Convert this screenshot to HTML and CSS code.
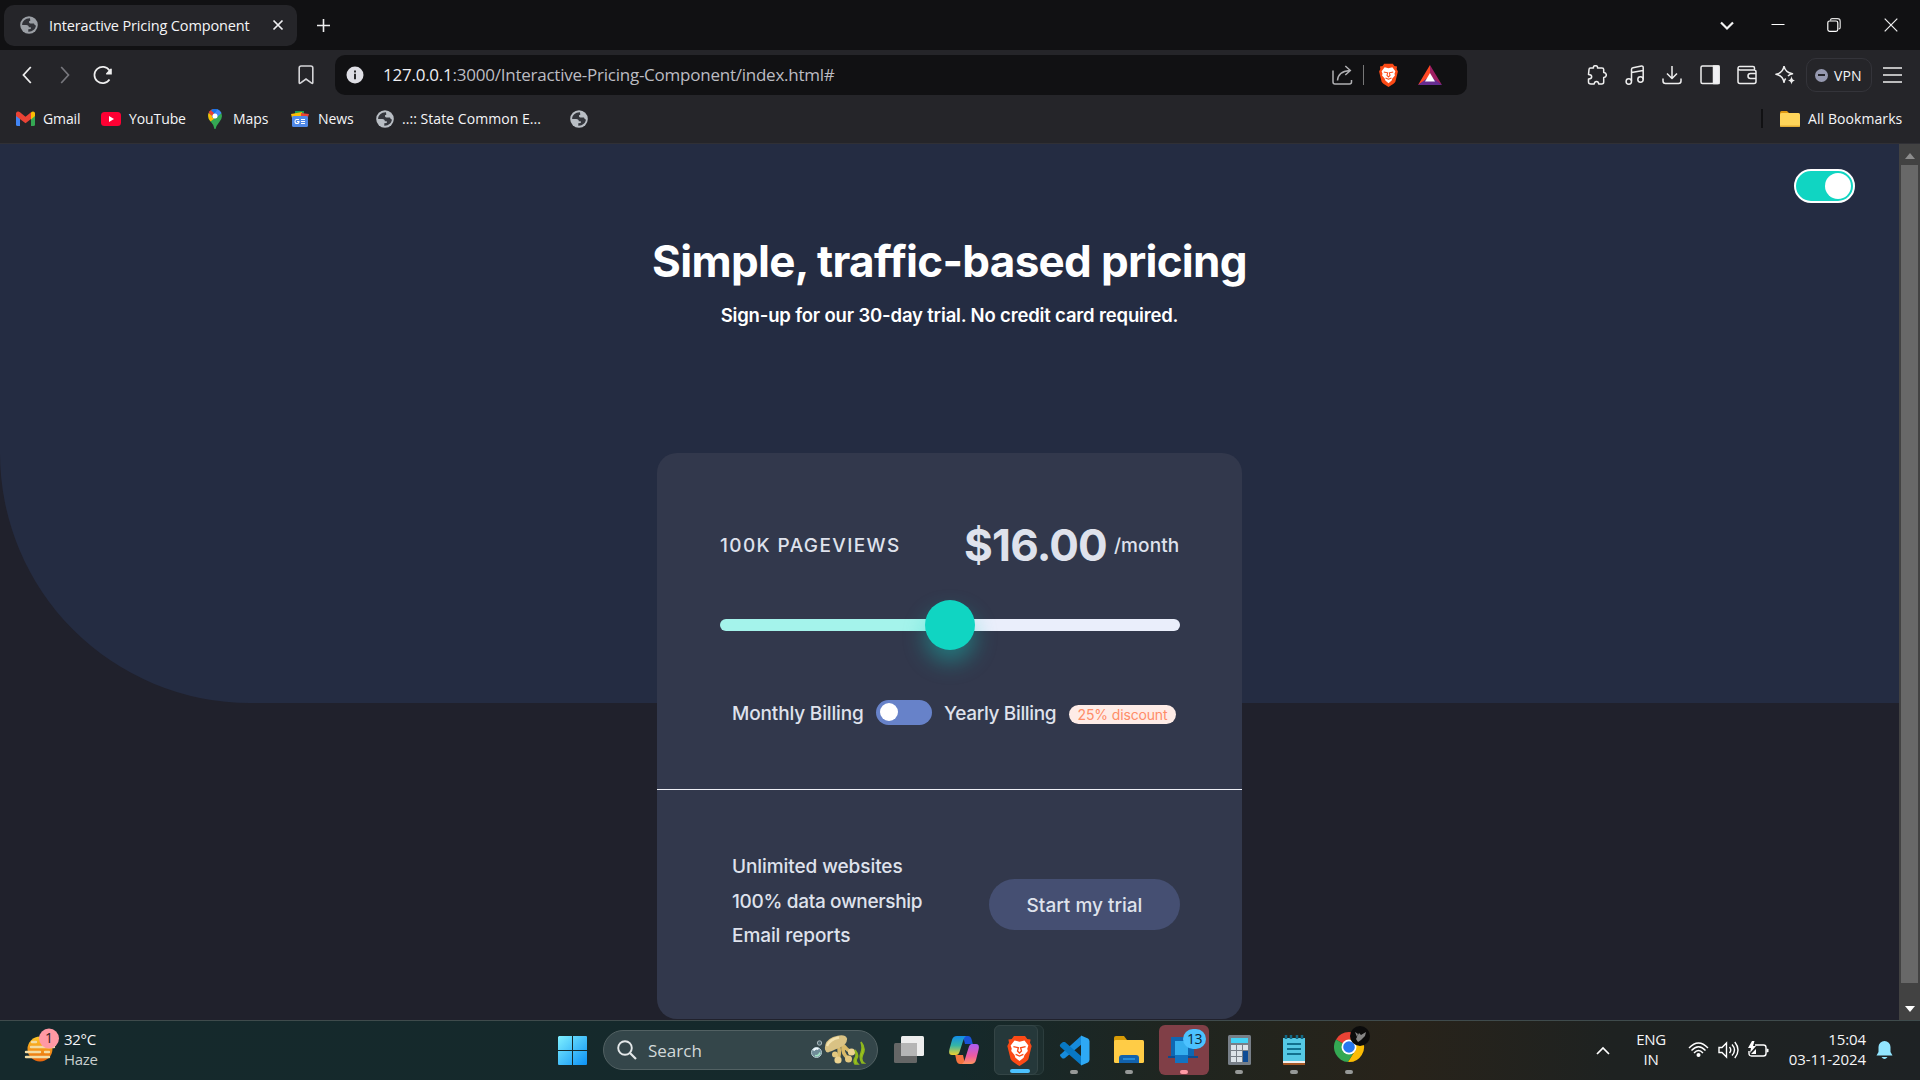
FILE: index.html
```html
<!DOCTYPE html>
<html lang="en">
<head>
<meta charset="utf-8">
<title>Interactive Pricing Component</title>
<link rel="stylesheet" href="styles.css">
</head>
<body>
<svg class="defs" width="0" height="0">
  <defs>
    <symbol id="globe" viewBox="0 0 18 18"><circle cx="9" cy="9" r="8.8" fill="#b9bec4"/><path d="M10 2.2C5.500 2 2.200 5 2.100 8.900L6.200 9C8.200 9 8.800 10 8.800 11.200L10.800 11.300L10.800 13L8.300 13.200L8.300 15.800C12.500 16 15.800 13 15.900 9.600C14.800 9.200 14.300 8.600 14 7.600L10.400 7.500C9.300 7.300 8.800 6.500 9 5.200L10.300 4.800Z" fill="#34363c"/></symbol>
    <symbol id="brave" viewBox="0 0 24 28"><path d="M7 1h10l2 2.500 3 .5-.5 3 1.500 3-3 12q-1 2-8 6-7-4-8-6L1 10l1.500-3L2 4l3-.5z" fill="#fb4a16"/><path d="M7.500 5l4.500 1 4.500-1L20 9.500l-1 3 .5 2L16.500 18l-.8 2.500L12 23.500l-3.700-3L7.500 18l-3-3.500.5-2-1-3z" fill="#fff"/><path d="M6.500 10.500l4.500 1-.8 3 1.800 1.800 1.800-1.800-.8-3 4.500-1M8.500 17.500l3.500 1.500 3.500-1.500" fill="none" stroke="#fb4a16" stroke-width="1.200"/></symbol>
  </defs>
</svg>

<header class="tabstrip">
  <div class="tab">
    <svg class="tab-globe" width="18" height="18"><use href="#globe"/></svg>
    <span class="tab-title">Interactive Pricing Component</span>
    <svg width="12" height="12" viewBox="0 0 12 12"><path d="M1.500 1.500l9 9m0-9l-9 9" stroke="#f0f0f2" stroke-width="1.700"/></svg>
  </div>
  <svg class="newtab" width="15" height="15" viewBox="0 0 15 15"><path d="M7.500 1v13M1 7.500h13" stroke="#eee" stroke-width="1.600"/></svg>
  <div class="window-buttons">
    <svg width="16" height="16" viewBox="0 0 16 16"><path d="M2 5.500l6 6 6-6" fill="none" stroke="#f3f3f3" stroke-width="2.200"/></svg>
    <svg width="14" height="16" viewBox="0 0 14 16"><path d="M0.500 7.500h13" stroke="#fff" stroke-width="1"/></svg>
    <svg width="14" height="14" viewBox="0 0 14 14"><path d="M3.500 2.500V2q.3-1.300 1.500-1.300h5.500q2.700 0 2.700 2.700v6q0 1.200-1.500 1.600" fill="none" stroke="#ddd" stroke-width="1.200"/><rect x=".8" y="3" width="10" height="10.300" rx="1.800" fill="none" stroke="#fff" stroke-width="1.200"/></svg>
    <svg width="14" height="14" viewBox="0 0 14 14"><path d="M.7.700l12.600 12.600M13.300.7L.7 13.300" stroke="#f0f0f0" stroke-width="1.200"/></svg>
  </div>
</header>

<nav class="toolbar">
  <div class="nav-left">
    <svg width="10" height="18" viewBox="0 0 10 18"><path d="M8.800 1L1.500 9l7.300 8" fill="none" stroke="#eee" stroke-width="1.800"/></svg>
    <svg width="10" height="18" viewBox="0 0 10 18"><path d="M1.200 1l7.300 8-7.300 8" fill="none" stroke="#77777d" stroke-width="1.700"/></svg>
    <svg class="reload" width="20" height="20" viewBox="0 0 20 20"><path d="M16.500 14.500A8.200 8.200 0 1 1 16.500 5.500" fill="none" stroke="#eee" stroke-width="1.700"/><path d="M18.800 4v5.500h-5.300q-1-.3-.3-1.200l4.200-4.500q.9-.7 1.400.2z" fill="#eee"/></svg>
    <svg class="mark" width="16" height="20" viewBox="0 0 16 20"><path d="M1.200 3q0-2 2-2h9.600q2 0 2 2v14.500q0 1.400-1.200.6L8 14l-5.600 4.100q-1.200.8-1.200-.6z" fill="none" stroke="#d5d5d8" stroke-width="1.600"/></svg>
  </div>
  <div class="urlbar">
    <svg width="18" height="18" viewBox="0 0 18 18"><circle cx="9" cy="9" r="8.500" fill="#dfdfe5"/><path d="M9 7.800v5.400M9 4.500v2" stroke="#222" stroke-width="1.900"/></svg>
    <span class="url"><b>127.0.0.1</b>:3000/Interactive-Pricing-Component/index.html#</span>
    <svg width="21" height="20" viewBox="0 0 21 20"><path d="M1 5.500V17q0 2 2 2h14.500q2 0 2-2v-2M5.500 15.500Q6 6.500 17.500 5.500M13.300 1l5 4.500-5 4.500" fill="none" stroke="#b0b0b3" stroke-width="1.500"/></svg>
    <i class="url-sep"></i>
    <svg width="21" height="24"><use href="#brave"/></svg>
    <svg class="bat" width="24" height="20" viewBox="0 0 24 20"><path d="M12 0L0 20l12-7z" fill="#ff4724"/><path d="M12 0l12 20-12-7z" fill="#9e1f63"/><path d="M0 20h24l-12-9z" fill="#662d91"/><path d="M12 8l5 8.500H7z" fill="#fff"/></svg>
  </div>
  <div class="tools">
    <svg viewBox="0 0 20 20"><path d="M2 4.500q0-1.500 1.500-1.500h3q-.5-2.300 2-2.300 2.300 0 2 2.300H15q1.700 0 1.700 1.500v3q2.600.2 2.600 2.500t-2.600 2.500V17q0 2-2 2h-3q-.2-2.500-2.200-2.500T7.200 19H4q-2.500 0-2.500-2v-3q3.200-.2 3.200-2.300T1.500 9.500z"/></svg>
    <svg viewBox="0 0 20 20"><circle cx="3.800" cy="16.500" r="2.700"/><circle cx="15.500" cy="14.500" r="2.700"/><path d="M6.500 16V4.500Q6.500 3 8 2.700l8.500-1.600q1.700-.2 1.700 1.400v12M6.500 7.500l11.700-2"/></svg>
    <svg viewBox="0 0 20 20"><path d="M10 1v12M5 8.500l5 5 5-5M1 13.500V16q0 2.500 2.500 2.500h13Q19 18.500 19 16v-2.500"/></svg>
    <svg viewBox="0 0 20 20"><rect x="1" y="1" width="18" height="17.500" rx="1.500"/><path d="M13.500 1H19v17.500h-5.500z" fill="#f1f1f4"/></svg>
    <svg viewBox="0 0 20 20"><path d="M1 3.500Q1 1 3.500 1.500H16q1.500 0 1.500 1.500v2M1 3.500v13q0 2 2 2h14q2 0 2-2V7q0-2-2-2H3Q1 5 1 3.500zM19 8.500h-5.500q-2.500 0-2.500 2.500t2.500 2.500H19"/></svg>
    <svg viewBox="0 0 20 20"><path d="M9 1.200Q10.200 7.500 17.500 8.800q-3 .5-4.500 2.200M9 1.200Q8 8 1 9.300q7 1.500 8 8 .4-2.300 1.700-3.800"/><path d="M16.500 11q.5 4 3.500 4.500-3 .5-3.500 4-.5-3.500-3.500-4 3-.5 3.500-4.500z" fill="#eee" stroke="none"/></svg>
  </div>
  <div class="vpn"><i></i><span>VPN</span></div>
  <svg width="19" height="18" viewBox="0 0 19 18"><path d="M0 2h19M0 9h19M0 16h19" stroke="#eee" stroke-width="1.600"/></svg>
</nav>

<nav class="bookmarks">
  <svg width="19" height="15" viewBox="0 0 19 15"><path d="M0 2h4v13H1.500Q0 15 0 13.500z" fill="#4285f4"/><path d="M15 2h4v11.500q0 1.500-1.500 1.500H15z" fill="#34a853"/><path d="M15 1.500q2-2.200 4 .2V5l-4 3.500z" fill="#fbbc04"/><path d="M0 2q1.500-2.500 4-.8l5.500 4.500L15 1.200V8l-5.500 4.200L0 5z" fill="#ea4335"/></svg>
  <span class="bm gmail">Gmail</span>
  <svg width="20" height="14" viewBox="0 0 20 14"><rect width="20" height="14" rx="3.500" fill="#ff0033"/><path d="M8 4l5 3-5 3z" fill="#fff"/></svg>
  <span class="bm youtube">YouTube</span>
  <svg width="14" height="20" viewBox="0 0 14 20"><path d="M7 0a7 7 0 0 1 7 7q0 3-3 6.500T7.500 20h-1Q6 16 3 13T0 7a7 7 0 0 1 7-7z" fill="#34a853"/><path d="M.7 4L7 9 2.500 12.500Q-1 8 .7 4z" fill="#fbbc04"/><path d="M.7 4L5 7.500 9.500.5Q4-1 1.500 2.300z" fill="#ea4335"/><path d="M3 1.400L6 4 4 9l7.500-7.500Q7-2 3 1.400z" fill="#1a73e8"/><path d="M9.500.5L4 7.500 7 10l6.500-6Q12 1 9.500.5z" fill="#4285f4"/><circle cx="7" cy="7" r="2.500" fill="#fff"/></svg>
  <span class="bm maps">Maps</span>
  <svg width="18" height="16" viewBox="0 0 18 16"><path d="M4 0h9v6H4z" fill="#1e9b52"/><path d="M0 3l11-2 1 6H1z" fill="#fbbc04"/><path d="M10 2l8 1-2 6h-6z" fill="#ea4335"/><rect x="1" y="5" width="16" height="11" rx="1.500" fill="#4f89e8"/><path d="M8 8.500H5.500q-1.500 0-1.500 2t2 2 2-2H6M10 8.500h4M10 10.500h4M10 12.500h4" stroke="#fff" fill="none" stroke-width="1.100"/></svg>
  <span class="bm news">News</span>
  <svg width="18" height="18"><use href="#globe"/></svg>
  <span class="bm state">..:: State Common E...</span>
  <svg width="18" height="18"><use href="#globe"/></svg>
  <i class="bm-sep"></i>
  <svg width="20" height="16" viewBox="0 0 20 16"><path d="M0 2Q0 0 1.500 0H7l2 2v4H0z" fill="#e09a12"/><rect y="2" width="20" height="14" rx="1.500" fill="#ffd55a"/><path d="M0 14.500h20q0 1.500-1.500 1.500h-17Q0 16 0 14.500z" fill="#e3ad35"/></svg>
  <span class="bm allbm">All Bookmarks</span>
</nav>

<div class="viewport">
  <main class="page">
    <section class="hero"></section>
    <div class="content">
      <div class="theme"><i></i></div>
      <h1><span>Simple, traffic-based pricing</span></h1>
      <p class="sub"><span>Sign-up for our 30-day trial. No credit card required.</span></p>
      <article class="card">
        <section class="plan">
          <div class="price-row">
            <span class="views">100K PAGEVIEWS</span>
            <span class="amount">$16.00</span>
            <span class="month">/month</span>
          </div>
          <div class="slider"><i></i></div>
          <div class="billing">
            <span class="monthly">Monthly Billing</span>
            <div class="switch"><i></i></div>
            <span class="yearly">Yearly Billing</span>
            <div class="badge"><span>25% discount</span></div>
          </div>
        </section>
        <section class="start">
          <ul>
            <li class="li1">Unlimited websites</li>
            <li class="li2">100% data ownership</li>
            <li class="li3">Email reports</li>
          </ul>
          <button><span>Start my trial</span></button>
        </section>
      </article>
    </div>
  </main>
  <aside class="scrollbar">
    <svg width="10" height="6" viewBox="0 0 10 6"><path d="M0 6l5-6 5 6z" fill="#8d8d8d"/></svg>
    <div class="thumb"></div>
    <svg width="10" height="6" viewBox="0 0 10 6"><path d="M0 0l5 6 5-6z" fill="#fff"/></svg>
  </aside>
</div>

<footer class="taskbar">
  <div class="weather">
    <svg width="36" height="38" viewBox="0 0 36 38"><defs><linearGradient id="sun" x1="0" y1="0" x2="0" y2="1"><stop offset="0" stop-color="#ffc928"/><stop offset="1" stop-color="#e8650c"/></linearGradient></defs><circle cx="16" cy="22" r="12.500" fill="url(#sun)"/><path d="M8 15h4M7 20h23M2 25h14M21 25h4M2 30h23" stroke="#f3dca3" stroke-width="2.400" stroke-linecap="round"/><circle cx="25" cy="11.500" r="10" fill="#ff99a4"/></svg>
    <span class="count">1</span>
    <div class="temps"><span class="deg">32°C</span><span class="haze">Haze</span></div>
  </div>
  <svg width="29" height="29" viewBox="0 0 29 29"><defs><linearGradient id="win" x1="0" y1="0" x2="1" y2="1"><stop offset="0" stop-color="#7ff0ff"/><stop offset="1" stop-color="#0c91f5"/></linearGradient></defs><path d="M1 0h13v14H0V1zM15 0h13q1 0 1 1v13H15zM0 15h14v14H1q-1 0-1-1zM15 15h14v13q0 1-1 1H15z" fill="url(#win)"/></svg>
  <div class="search">
    <svg width="20" height="20" viewBox="0 0 20 20"><circle cx="8" cy="8" r="6.800" fill="none" stroke="#e4e8e9" stroke-width="1.900"/><path d="M13 13l6 6" stroke="#e4e8e9" stroke-width="2.200"/></svg>
    <span>Search</span>
    <svg width="56" height="32" viewBox="0 0 56 32"><circle cx="6.500" cy="18.500" r="5" fill="#6f8c98" stroke="#b6cbd2"/><path d="M3.500 16.500q2-3 5-1.500" stroke="#f2fbff" stroke-width="2" fill="none"/><path d="M5 21.500q4 1 5-3" stroke="#a3e2c6" stroke-width="1.600" fill="none"/><circle cx="9.500" cy="9" r="2.200" fill="#526a70" stroke="#a8b7bb"/><path d="M29 14q1 6-1 11M33 12q-1 8 5 12M34 12q3 4 7 6" fill="none" stroke="#d8b968" stroke-width="3.500" stroke-linecap="round"/><path d="M15 15.500Q14 7 23 3q12-4 14 1.500.5 6-8 9.500t-11 4.500q-2.500-.5-3-3z" fill="#d9c284"/><path d="M17 12Q20 5 29 3.500" stroke="#f3e2ae" stroke-width="2.500" fill="none"/><circle cx="25" cy="20.500" r="3" fill="#e3c87f"/><circle cx="28" cy="26" r="3.600" fill="#ecd390"/><circle cx="38.500" cy="25" r="3.500" fill="#e3c87f"/><circle cx="41.500" cy="18" r="3.600" fill="#ecd390"/><path d="M45 30q-2-3 0-6t0-8q4 5 2 8t1 6zM52 29q-3-5-1-10t0-11q5 6 2 12t1 9z" fill="#a5c91e" stroke="#8db61d" stroke-width="1.500"/></svg>
  </div>
  <div class="apps">
    <div class="app"><svg width="30" height="30" viewBox="0 0 30 30"><rect y="8" width="23" height="20" rx="1.500" fill="#656666"/><rect x="7" y="1" width="23" height="20" rx="1.500" fill="#ededed"/><path d="M7 8h16v13H8.500Q7 21 7 19.500z" fill="#b5b5b5"/></svg></div>
    <div class="app"><svg width="30" height="28" viewBox="0 0 30 28"><defs><linearGradient id="ca" x1="0" y1="0" x2="0" y2="1"><stop offset="0" stop-color="#128de9"/><stop offset=".5" stop-color="#35b5a5"/><stop offset="1" stop-color="#f0d030"/></linearGradient><linearGradient id="cb" x1="0" y1="0" x2="0" y2="1"><stop offset="0" stop-color="#a95cf5"/><stop offset=".6" stop-color="#ed5ba0"/><stop offset="1" stop-color="#ff9460"/></linearGradient></defs><path d="M14 0h5q2.500 0 3.500 3l1.300 5H16z" fill="#1953d8"/><path d="M16 28h-5q-2.500 0-3.500-3L6.200 19H14z" fill="#f4733f"/><path d="M8 0h9q-2 1-3 5l-3.500 11Q9.500 19 7 19H3q-4 0-2.500-6L3 4q1-4 5-4z" fill="url(#ca)"/><path d="M22 28h-9q2-1 3-5l3.500-11q1-4 3.500-4h4q4 0 2.500 6L27 24q-1 4-5 4z" fill="url(#cb)"/></svg></div>
    <div class="app stacked"><div class="active"><svg width="27" height="31"><use href="#brave"/></svg></div><i class="on"></i></div>
    <div class="app"><svg width="31" height="31" viewBox="0 0 31 31"><path d="M22 1L2 19q-2 1 0 3l1 1q1 1 3 0L23 9z" fill="#168bdc"/><path d="M6 7L4 7 1.500 9q-1.500 2 0 3L22 30v-9z" fill="#0878c4"/><path d="M22 .5l7 3q1.500 1 1.500 3v18q0 2-1.500 3l-7 3z" fill="#2ea9f5"/></svg><i></i></div>
    <div class="app"><svg width="30" height="28" viewBox="0 0 30 28"><path d="M0 2Q0 0 2 0h8l3 4v5H0z" fill="#d79b06"/><rect y="4" width="30" height="23" rx="1.500" fill="#ffcc46"/><path d="M5 27v-5q0-3 3-3h14q3 0 3 3v5z" fill="#1262ad"/><path d="M9 23h12" stroke="#2c9be9" stroke-width="1.500"/></svg><i></i></div>
    <div class="app alert"><svg width="32" height="28" viewBox="0 0 32 28"><path d="M3 1h23v19H3z" fill="#0f67b2"/><path d="M0 20h30v2H0z" fill="#0c4c91"/><path d="M7 5h13v22H7z" fill="#1273c2"/><path d="M7 5h13v14H7z" fill="#35aeee"/></svg><span class="num">13</span><i></i></div>
    <div class="app"><svg width="23" height="30" viewBox="0 0 23 30"><rect width="23" height="30" rx="1.500" fill="#777f88"/><path d="M3 3h17v5H3z" fill="#43d3f6"/><path d="M3 10h5v5H3zM9 10h5v5H9zM15 10h5v5h-5zM3 16h5v5H3zM9 16h5v5H9zM3 22h5v5H3zM9 22h5v5H9z" fill="#dce3e9"/><path d="M15 16h5v11h-5z" fill="#0d4b95"/></svg><i></i></div>
    <div class="app"><svg width="22" height="30" viewBox="0 0 22 30"><path d="M0 26h22v4H1q-1 0-1-1z" fill="#a65825"/><path d="M0 25h22v3H0z" fill="#efefef"/><path d="M0 3h22v23H0z" fill="#55c9e5"/><path d="M3 0v4M8 0v4M14 0v4M19 0v4" stroke="#126986" stroke-width="2.500"/><path d="M4 9h14M4 14h14M4 19h14" stroke="#12718f" stroke-width="2"/></svg><i></i></div>
    <div class="app"><svg class="chrome" width="38" height="38" viewBox="0 0 38 38"><path d="M15 21L2 13.500A15 15 0 0 1 28 13.500H15z" fill="#ea4335"/><path d="M15 21L2 13.500A15 15 0 0 0 14 36l6-10z" fill="#34a853"/><path d="M15 13.500h13A15 15 0 0 1 14 36l7.500-12z" fill="#fbbc04"/><circle cx="15" cy="21" r="7.500" fill="#fff"/><circle cx="15" cy="21" r="5.800" fill="#2677f1"/><circle cx="26" cy="10" r="10" fill="#0b0b0b"/><path d="M21 6l3 2-1 3zM25 7l2 2 5-3-1 4-4 4-3 2-2-3z" fill="#858585"/></svg><i></i></div>
  </div>
  <div class="tray">
    <svg width="14" height="9" viewBox="0 0 14 9"><path d="M1 8l6-6 6 6" fill="none" stroke="#fff" stroke-width="1.700"/></svg>
    <div class="lang"><span>ENG</span><span>IN</span></div>
    <svg class="wifi" width="21" height="16" viewBox="0 0 21 16"><g fill="none" stroke="#fff" stroke-width="1.400"><path d="M1 6Q10.500-4 20 6M3.500 8.500Q10.500 1 17.500 8.500M6 11q4.500-5 9 0"/></g><circle cx="10.500" cy="13" r="2" fill="#fff"/></svg>
    <svg class="speaker" width="21" height="18" viewBox="0 0 21 18"><g fill="none" stroke="#fff" stroke-width="1.400"><path d="M1 6.500h3l4.500-4.500v14L4 11.500H1zM11.500 6q2.500 3 0 6M14 3.500q5 5.500 0 11M16.800 1q6.400 8 0 16"/></g></svg>
    <svg class="battery" width="21" height="18" viewBox="0 0 21 18"><path d="M7 4h8.500q2.500 0 2.500 2.500v6q0 2.500-2.500 2.500H3.500Q1 15 1 12.500V10" fill="none" stroke="#fff" stroke-width="1.400"/><path d="M18.500 7.500l2 .5v3l-2 .5zM4 0L0 7h3l-1 5 6-7H5l1.500-5zM3 13l5-5v5z" fill="#fff"/></svg>
    <div class="clock"><span class="time">15:04</span><span class="date">03-11-2024</span></div>
    <svg width="17" height="20" viewBox="0 0 17 20"><path d="M2.500 7a6 6 0 0 1 12 0v5l2 3.500H.5l2-3.500zM5.500 17h6q-3 4-6 0z" fill="#91e5ff"/></svg>
  </div>
</footer>
</body>
</html>
```
FILE: styles.css
```css
* { box-sizing: border-box; }
body { margin: 0; width: 1920px; height: 1080px; overflow: hidden; background: #20212c; display: flex; flex-direction: column; font-family: "Open Sans", "Noto Sans", sans-serif; color: #f5f5f7; }
svg { display: block; flex: none; }
span { white-space: nowrap; flex: none; }
i { display: block; flex: none; font-style: normal; }
.defs { position: absolute; }

.tabstrip { height: 50px; flex: none; background: #111113; display: flex; align-items: center; padding-left: 4px; }
.tab { width: 293px; height: 41px; background: #252529; border-radius: 10px; display: flex; align-items: center; padding-left: 16px; }
.tab-globe { opacity: .8; }
.tab-title { font-size: 14.5px; width: 223px; margin-left: 11px; letter-spacing: -.14px; }
.newtab { margin-left: 19px; }
.window-buttons { margin-left: auto; display: flex; align-items: center; gap: 42px; padding-right: 22px; }
.window-buttons svg:first-child { margin-right: -6px; }
.window-buttons svg:last-child { margin-left: 1px; }

.toolbar { height: 50px; flex: none; background: #252529; display: flex; align-items: center; }
.nav-left { width: 335px; display: flex; align-items: center; padding-left: 22px; }
.nav-left svg:nth-child(2) { margin-left: 28px; }
.nav-left .reload { margin-left: 23px; }
.nav-left .mark { margin-left: auto; margin-right: 21px; }
.urlbar { width: 1132px; height: 40px; border-radius: 10px; background: #111113; display: flex; align-items: center; padding-left: 11px; }
.url { font-size: 17px; width: 949px; margin-left: 19px; margin-top: -2px; color: #bcbcc2; letter-spacing: -.24px; }
.url b { font-weight: 400; color: #eeeef2; }
.url-sep { width: 1px; height: 20px; background: #777; margin: 0 14px 0 10px; }
.urlbar .bat { margin-left: 19px; }
.tools { display: flex; gap: 17.600px; margin-left: 120px; width: 219px; }
.tools svg { width: 20px; height: 20px; fill: none; stroke: #eee; stroke-width: 1.500; stroke-linejoin: round; }
.vpn { width: 66px; height: 34px; border: 1px solid #34343a; border-radius: 10px; display: flex; align-items: center; padding-left: 8px; gap: 6px; margin-right: 11px; font-size: 14px; }
.vpn i { width: 13px; height: 13px; border-radius: 50%; background: linear-gradient(#25252a, #25252a) center/7px 2px no-repeat, #9699b0; }
.vpn span { letter-spacing: .1px; }

.bookmarks { height: 44px; flex: none; background: #252529; border-bottom: 1px solid #303035; display: flex; align-items: center; padding: 0 0 6px 16px; font-size: 14px; }
.bm { margin-left: 8px; margin-top: -1px; letter-spacing: -.1px; }
.gmail { width: 58px; }
.youtube { width: 79px; }
.maps { width: 58px; margin-left: 11px; }
.news { width: 58px; margin-left: 9px; }
.state { width: 168px; letter-spacing: .05px; }
.bm-sep { width: 2px; height: 19px; background: #111113; margin-left: auto; margin-right: 17px; }
.allbm { width: 112px; letter-spacing: .08px; }

.viewport { height: 876px; flex: none; display: flex; }
.page { width: 1899px; display: grid; grid-template-rows: 876px; grid-template-columns: 1899px; }
.hero { grid-area: 1 / 1; height: 559px; background: #242c42; border-bottom-left-radius: 250px; }
.content { grid-area: 1 / 1; z-index: 1; display: flex; flex-direction: column; align-items: center; font-family: Inter, sans-serif; font-weight: 500; }
.theme { width: 61px; height: 34px; margin: 25px 44px 0 0; align-self: flex-end; border: 2px solid #fff; border-radius: 17px; background: #10d5c2; display: flex; align-items: center; justify-content: flex-end; padding-right: 2px; }
.theme i { width: 26px; height: 26px; border-radius: 50%; background: #fff; }
h1 { margin: 32px 0 0; height: 54px; line-height: 53px; font-size: 44px; font-weight: 700; color: #fff; letter-spacing: -.7px; }
.sub { margin: 11px 0 0; height: 30px; line-height: 30px; font-size: 18.500px; font-weight: 600; color: #fff; letter-spacing: -.17px; }
.card { width: 585px; height: 566px; margin-top: 123px; border-radius: 20px; background: #32384c; color: #dfe2ec; font-size: 19px; }
.plan { height: 337px; border-bottom: 1px solid #eef0f6; padding: 63px 62px 0 63px; }
.price-row { display: flex; align-items: center; height: 58px; }
.views { width: 244px; letter-spacing: 1.400px; }
.amount { width: 150px; font-size: 44px; font-weight: 700; letter-spacing: -.8px; }
.month { letter-spacing: .1px; }
.slider { height: 12px; margin-top: 45px; border-radius: 6px; background: linear-gradient(90deg, #a4f3eb 50%, #eaeefb 50%); display: flex; align-items: center; justify-content: center; }
.slider i { width: 50px; height: 50px; border-radius: 50%; background: #10d5c2; box-shadow: 0 12px 22px rgba(16, 213, 194, .4); }
.billing { display: flex; align-items: center; height: 36px; margin-top: 63px; padding-left: 12px; }
.monthly { width: 144px; letter-spacing: -.15px; margin-top: 2px; }
.switch { width: 56px; height: 25px; border-radius: 13px; background: #6782c9; display: flex; align-items: center; padding-left: 4px; margin-right: 12px; }
.switch i { width: 18px; height: 18px; border-radius: 50%; background: #fff; }
.yearly { width: 125px; letter-spacing: -.35px; margin-top: 2px; }
.badge { width: 107px; height: 19px; border-radius: 10px; background: #feece7; color: #ff8d68; font-size: 14px; font-weight: 400; letter-spacing: -.15px; line-height: 19px; display: flex; align-items: center; justify-content: center; margin-top: 5px; }
.start { display: flex; justify-content: space-between; padding: 60px 62px 0 75px; }
ul { list-style: none; margin: 0; padding: 0; line-height: 34.500px; white-space: nowrap; }
.li1, .li3 { letter-spacing: -.08px; }
.li2 { letter-spacing: -.32px; }
button { margin: 29px 0 0; border: 0; width: 191px; height: 51px; border-radius: 26px; background: #454f72; color: #dfe2ec; font: 500 19px Inter, sans-serif; padding: 2px 0 0; }

.scrollbar { width: 21px; background: #424242; display: flex; flex-direction: column; align-items: center; padding: 9px 0 8px; }
.thumb { width: 17px; height: 818px; margin: 6px 0 auto; background: #686868; }

.taskbar { height: 60px; flex: none; border-top: 1px solid #3f4b4c; background: linear-gradient(90deg, #15292c 0%, #15292b 50%, #20251f 62%, #28231a 73%, #1e2221 84%, #1e2224 100%); display: flex; align-items: center; padding-bottom: 1px; font-size: 15px; }
.weather { width: 558px; display: flex; align-items: center; padding-left: 24px; }
.weather svg { margin-top: -8px; }
.count { position: relative; left: -15px; top: -13px; width: 6px; font-size: 14px; color: #301b20; }
.temps { display: flex; flex-direction: column; line-height: 20px; margin: -3px 0 0 -2px; font-size: 15px; letter-spacing: -.3px; }
.haze { color: #c9cece; }
.search { width: 275px; height: 40px; margin-left: 16px; border: 1px solid #526163; border-radius: 20px; background: #34464a; display: flex; align-items: center; padding-left: 13px; color: #d2d9da; font-size: 17px; }
.search span { width: 162px; margin-left: 11px; }
.apps { display: flex; gap: 5px; margin-left: 6px; }
.app { width: 50px; height: 50px; border-radius: 6px; display: flex; justify-content: center; align-items: center; position: relative; }
.app i { position: absolute; bottom: 1px; left: 21px; width: 8px; height: 4px; border-radius: 2px; background: #969998; }
.app i.on { left: 15px; width: 20px; background: #4cc2ff; }
.stacked { justify-content: flex-start; background: #1e2f2f; border: 1px solid #2c3d3d; }
.active { width: 44px; height: 50px; margin: -1px 0 -1px -1px; border-radius: 6px; background: #25383a; border: 1px solid #344546; display: flex; align-items: center; padding-left: 11px; }
.alert { background: #803f47; }
.alert i { background: #ff9aa5; }
.num { position: absolute; right: 3px; top: 4px; width: 23px; height: 20px; border-radius: 10px; background: #4cc2ff; color: #0c2735; font-size: 14px; line-height: 19px; text-align: center; letter-spacing: -.4px; }
.chrome { margin: -10px -8px 0 0; }
.tray { margin-left: auto; display: flex; align-items: center; padding-right: 27px; line-height: 20px; font-size: 15px; letter-spacing: -.1px; }
.lang { width: 36px; margin: -2px 0 0 23px; display: flex; flex-direction: column; align-items: center; letter-spacing: -.3px; }
.wifi { margin-left: 19px; }
.speaker, .battery { margin-left: 9px; }
.clock { display: flex; flex-direction: column; align-items: flex-end; width: 97px; margin: -2px 10px 0 0; }
```
